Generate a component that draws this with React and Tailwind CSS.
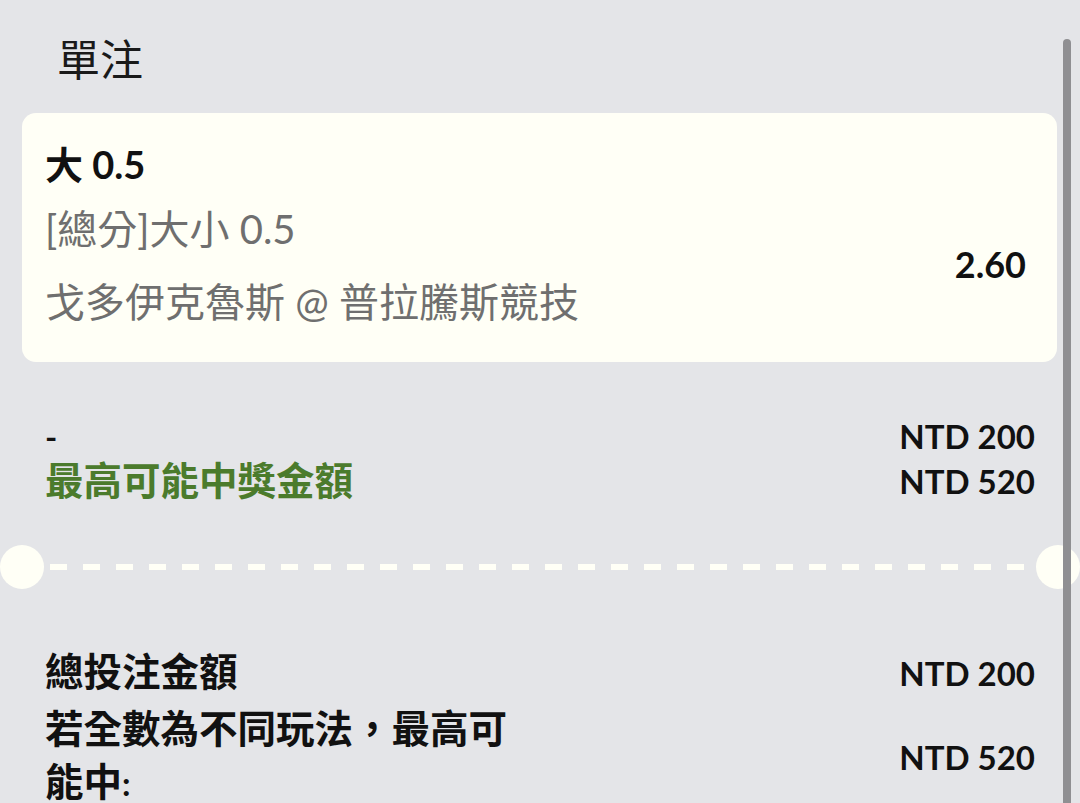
import React from 'react';

const CJK = /([\u2E80-\u9FFF\uF900-\uFAFF\uFF00-\uFFEF\u3000-\u303F]+)/;

// Latin runs stay in Lato, CJK runs get the larger CJK size
function Mixed({ text }) {
  return text.split(CJK).map((part, i) =>
    i % 2 === 1 ? (
      <span key={i} className="text-[38.5px] leading-none font-['Noto_Sans_CJK_TC',sans-serif]">{part}</span>
    ) : (
      <span key={i}>{part}</span>
    )
  );
}

function Amount({ children }) {
  return <div className="text-[33px] font-bold text-[#111]">{children}</div>;
}

export default function App() {
  return (
    <div className="relative h-[803px] w-full overflow-hidden bg-[#e4e5e8] font-['Lato','Noto_Sans_CJK_TC',sans-serif] text-[#111]">
      {/* scrollbar */}
      <div className="absolute right-[9px] top-[39px] bottom-0 w-2 rounded-t-full bg-[#8f8f92]" />

      <div className="pt-[27px] pl-[57px] leading-[60px] text-[43px] font-['Noto_Sans_CJK_TC',sans-serif] text-[#1a1a1a]">
        單注
      </div>

      {/* selection card */}
      <div className="ml-[22px] mr-[23px] mt-[26px] flex rounded-[14px] bg-[#fffff6] pl-[23px] pr-[31px] pt-[25px] pb-[34px]">
        <div className="flex-1">
          <div className="leading-[52px] text-[38px] font-bold text-[#111]">大 0.5</div>
          <div className="mt-[13px] leading-[52px] text-[40px] text-[#6f6f6f]">[總分]大小 0.5</div>
          <div className="mt-[21px] leading-[52px] text-[40px] text-[#6f6f6f]">戈多伊克魯斯 @ 普拉騰斯競技</div>
        </div>
        <div className="self-center mt-[61px] text-[36px] leading-[44px] font-bold text-[#111]">2.60</div>
      </div>

      {/* stake / potential win */}
      <div className="mt-[52px] flex justify-between px-[45px] text-[33px] leading-[45px]">
        <div>
          <div className="font-bold">-</div>
          <div className="font-bold text-[#4b7b2c]">
            <Mixed text="最高可能中獎金額" />
          </div>
        </div>
        <div className="text-right">
          <Amount>NTD 200</Amount>
          <Amount>NTD 520</Amount>
        </div>
      </div>

      {/* ticket divider */}
      <div className="mt-[40px] flex items-center">
        <div className="h-11 w-11 shrink-0 rounded-full bg-[#fffff6]" />
        <div className="mx-[6px] h-[6px] flex-1 bg-[repeating-linear-gradient(90deg,#fffff6_0_17px,transparent_17px_33px)]" />
        <div className="h-11 w-11 shrink-0 rounded-full bg-[#fffff6]" />
      </div>

      {/* totals */}
      <div className="mt-[58px] px-[45px] text-[33px] leading-[53px] font-bold">
        <div className="flex items-center justify-between">
          <div><Mixed text="總投注金額" /></div>
          <Amount>NTD 200</Amount>
        </div>
        <div className="mt-[4px] flex items-center justify-between">
          <div className="w-[470px]"><Mixed text="若全數為不同玩法，最高可能中:" /></div>
          <Amount>NTD 520</Amount>
        </div>
      </div>
    </div>
  );
}
